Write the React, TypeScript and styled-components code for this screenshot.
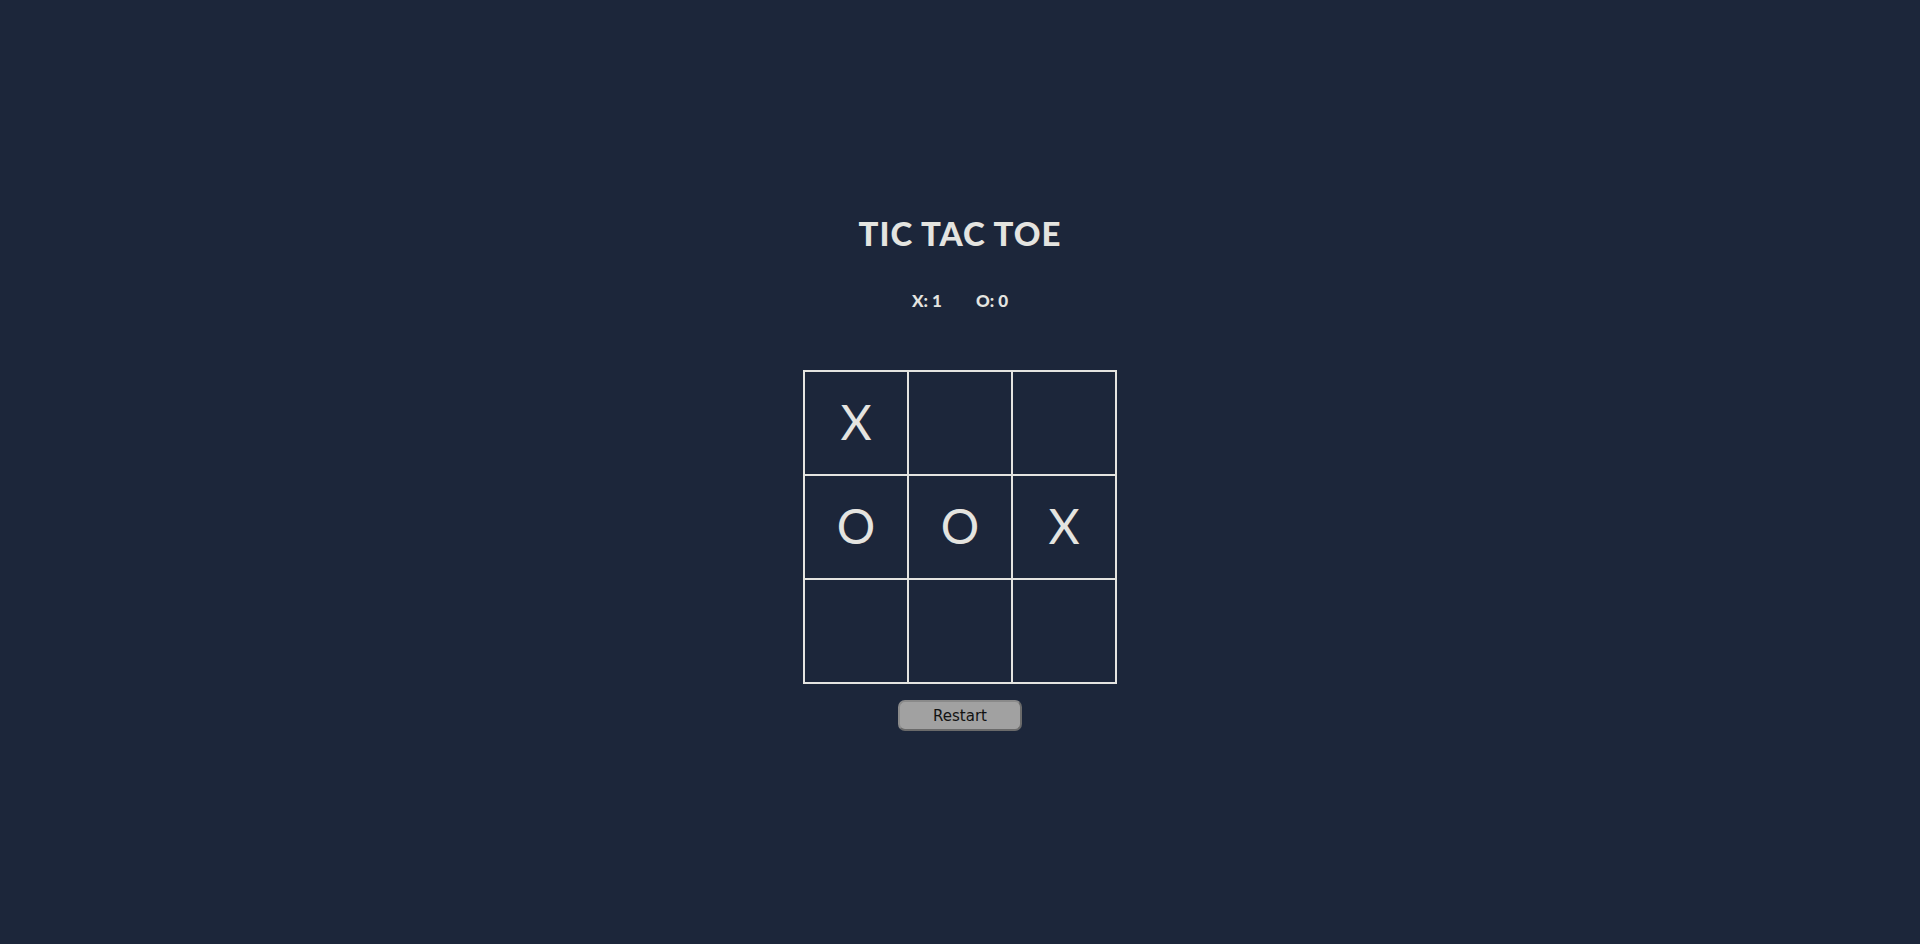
import React from "react";
import styled, { createGlobalStyle } from "styled-components";

const Global = createGlobalStyle`
  html, body { margin: 0; padding: 0; background: #1c263a; }
  body { font-family: "Lato", "Open Sans", sans-serif; }
`;

const Page = styled.main`
  min-height: 944px;
  display: flex;
  flex-direction: column;
  align-items: center;
  padding-top: 211px;
  box-sizing: border-box;
  color: #e4e4e0;
`;

const Title = styled.h1`
  margin: 0;
  font-family: "Lato", sans-serif;
  font-weight: 900;
  font-size: 33px;
  line-height: 44px;
  letter-spacing: 1px;
`;

const Scores = styled.div`
  display: flex;
  gap: 34px;
  margin-top: 34px;
  font-family: "Lato", sans-serif;
  font-weight: 900;
  font-size: 17px;
  line-height: 24px;
`;

const Board = styled.div`
  margin-top: 57px;
  display: grid;
  grid-template-columns: repeat(3, 102px);
  grid-template-rows: repeat(3, 102px);
  gap: 2px;
  padding: 2px;
  background: #e4e4e0;
`;

const Cell = styled.div`
  background: #1c263a;
  display: flex;
  align-items: center;
  justify-content: center;
  font-family: "Lato", sans-serif;
  font-weight: 400;
  font-size: 48px;
  color: #e4e4e0;
  padding-bottom: 3px;
  box-sizing: border-box;
`;

const RestartButton = styled.button`
  margin-top: 16px;
  width: 124px;
  height: 31px;
  background: #a1a1a1;
  border: 2px solid #6a6a6a;
  border-top-color: #8a8a8a;
  border-left-color: #8a8a8a;
  border-radius: 7px;
  font-family: "DejaVu Sans", sans-serif;
  font-size: 15px;
  color: #121212;
  padding: 0;
`;

const cells = ["X", "", "", "O", "O", "X", "", "", ""];

export default function App() {
  return (
    <>
      <Global />
      <Page>
        <Title>TIC TAC TOE</Title>
        <Scores>
          <span>X: 1</span>
          <span>O: 0</span>
        </Scores>
        <Board>
          {cells.map((c, i) => (
            <Cell key={i}>{c}</Cell>
          ))}
        </Board>
        <RestartButton>Restart</RestartButton>
      </Page>
    </>
  );
}
